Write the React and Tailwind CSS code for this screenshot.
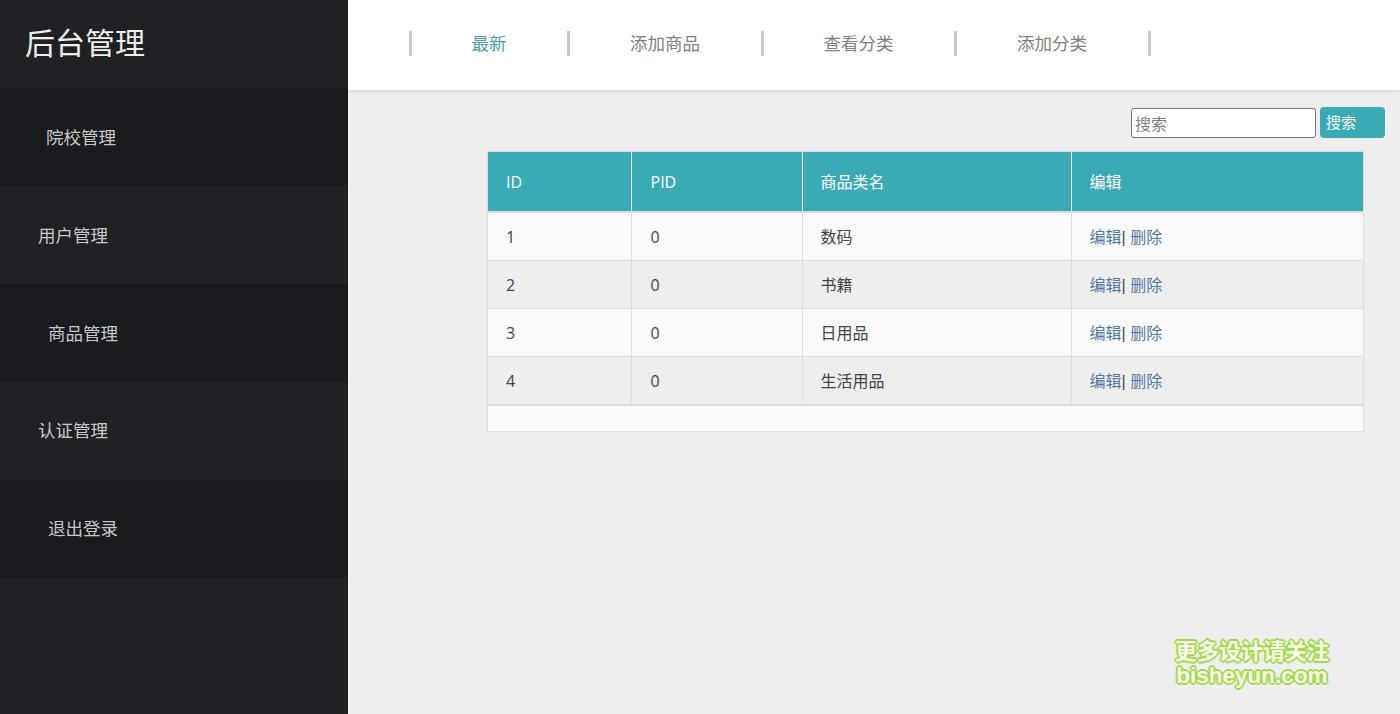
const font = "font-['Open_Sans','Noto_Sans_CJK_SC',sans-serif]";

const menu = [
  { label: '院校管理', cls: 'bg-[#191b1e] pl-[46px]' },
  { label: '用户管理', cls: 'pl-[38px]' },
  { label: '商品管理', cls: 'bg-[#191b1e] pl-[48px]' },
  { label: '认证管理', cls: 'pl-[38px] pb-[2px]' },
  { label: '退出登录', cls: 'bg-[#191b1e] pl-[48px] pb-[2px]' },
];

const tabs = ['最新', '添加商品', '查看分类', '添加分类'];

const rows = [
  { id: 1, pid: 0, name: '数码' },
  { id: 2, pid: 0, name: '书籍' },
  { id: 3, pid: 0, name: '日用品' },
  { id: 4, pid: 0, name: '生活用品' },
];

export default function App() {
  return (
    <div className={`flex h-[714px] w-[1400px] overflow-hidden relative bg-[#eeeeee] ${font}`}>
      {/* Sidebar */}
      <aside className="w-[348px] shrink-0 bg-[#1f2125]">
        <div className="h-[88px] pl-[25px] pb-[4px] flex items-center text-[30px] text-[#eeeeee]">后台管理</div>
        {menu.map((m) => (
          <div key={m.label} className={`h-[98px] flex items-center text-[17.5px] text-[#c8c8c8] ${m.cls}`}>
            {m.label}
          </div>
        ))}
      </aside>

      <main className="flex-1 min-w-0">
        {/* Top tabs */}
        <div className="h-[90px] bg-white shadow-[0_1px_4px_rgba(0,0,0,0.12)] pl-[60.5px] pb-[3px] flex items-center">
          {tabs.map((t, i) => (
            <div key={t} className="h-[25px] pl-[60px] pr-[60.5px] border-l-[3px] border-[#c9c9c9] flex items-center text-[17.5px] last:border-r-[3px]">
              <span className={i === 0 ? 'text-[#4aa3ab]' : 'text-[#808080]'}>{t}</span>
            </div>
          ))}
        </div>

        {/* Search */}
        <div className="h-[61px] pr-[15px] pt-[17px] flex justify-end items-start">
          <input
            placeholder="搜索"
            className="w-[185px] h-[30px] mt-[1px] pl-[3px] pr-[4px] pt-[2px] bg-white border border-[#767676] rounded-[3px] text-[16px] placeholder:text-[#808080] outline-none"
          />
          <button className="w-[65px] h-[31px] ml-[4px] pl-[6px] text-left bg-[#3aabb5] rounded-[4px] text-[15px] text-white">
            搜索
          </button>
        </div>

        {/* Table */}
        <div className="ml-[139px] mr-[36px] border border-[#dddddd] bg-[#f9f9f9]">
          <table className="w-full table-fixed border-collapse text-[16px] text-[#444444]">
            <colgroup>
              <col className="w-[143px]" />
              <col className="w-[171px]" />
              <col className="w-[269px]" />
              <col />
            </colgroup>
            <thead>
              <tr className="h-[60px] bg-[#3aabb5] text-white border-b-2 border-[#d5dcdd]">
                <th className="px-[18px] text-left font-normal border-r border-[#e6f4f5]">ID</th>
                <th className="pl-[19px] pr-[18px] text-left font-normal border-r border-[#e6f4f5]">PID</th>
                <th className="px-[18px] text-left font-normal border-r border-[#e6f4f5]">商品类名</th>
                <th className="px-[18px] text-left font-normal">编辑</th>
              </tr>
            </thead>
            <tbody>
              {rows.map((r, i) => (
                <tr key={r.id} className={`h-[48px] border-b border-[#dddddd] ${i % 2 ? 'bg-[#eeeeee]' : 'bg-[#f9f9f9]'}`}>
                  <td className="px-[18px] pt-[2px] border-r border-[#dddddd]">{r.id}</td>
                  <td className="pl-[19px] pr-[18px] pt-[2px] border-r border-[#dddddd]">{r.pid}</td>
                  <td className="px-[18px] pt-[2px] border-r border-[#dddddd]">{r.name}</td>
                  <td className="px-[18px] pt-[2px]">
                    <a className="text-[#4f7aa3]">编辑</a>
                    <span className="font-['Liberation_Sans',sans-serif]">| </span>
                    <a className="text-[#4f7aa3]">删除</a>
                  </td>
                </tr>
              ))}
            </tbody>
          </table>
          <div className="h-[26px] border-t border-[#dddddd]" />
        </div>
      </main>

      {/* Watermark */}
      <div className="absolute left-[1174px] top-[638px] w-[156px] text-center font-bold text-[#f6fbea] [text-shadow:-1px_-1px_0_#a3da4b,1px_-1px_0_#a3da4b,-1px_1px_0_#a3da4b,1px_1px_0_#a3da4b,0_2px_0_#a3da4b,2px_0_0_#a3da4b,-2px_0_0_#a3da4b,0_-2px_0_#a3da4b]">
        <div className="h-[25px] leading-[25px] text-[22px] whitespace-nowrap">更多设计请关注</div>
        <div className="h-[26px] leading-[26px] text-[22.5px] whitespace-nowrap font-['Liberation_Sans',sans-serif]">bisheyun.com</div>
      </div>
    </div>
  );
}
